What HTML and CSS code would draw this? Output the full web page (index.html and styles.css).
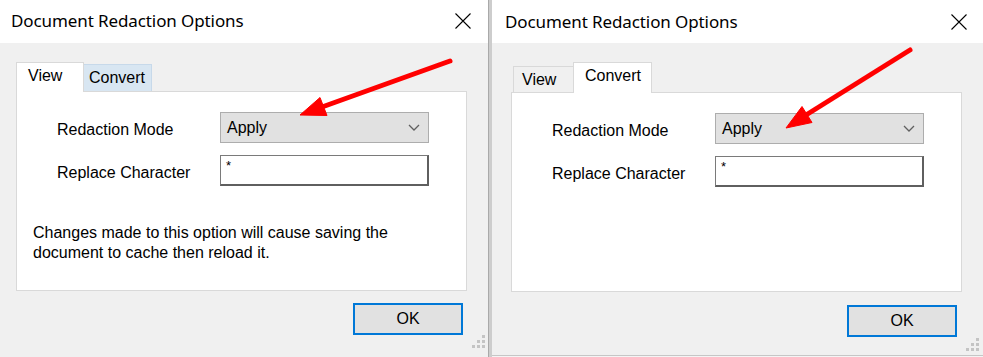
FILE: index.html
```html
<!DOCTYPE html>
<html>
<head>
<meta charset="utf-8">
<link rel="stylesheet" href="styles.css">
</head>
<body>
<div class="screen">
  <div class="dialog dialog-left">
    <div class="titlebar">
      <span class="title">Document Redaction Options</span>
      <svg class="close" width="16" height="16" viewBox="0 0 16 16"><path d="M0.5 0.5L15.5 15.5M15.5 0.5L0.5 15.5" stroke="#000" stroke-width="1.1" fill="none"/></svg>
    </div>
    <div class="body">
      <div class="tabs">
        <div class="tab tab-active tab-view-l">View</div>
        <div class="tab tab-hover tab-convert-l">Convert</div>
      </div>
      <div class="panel">
        <div class="row row-first">
          <span class="label">Redaction Mode</span>
          <div class="combo"><span>Apply</span>
            <svg class="chev" width="12" height="7" viewBox="0 0 12 7"><path d="M1 1L6 6L11 1" stroke="#606060" stroke-width="1.3" fill="none"/></svg>
          </div>
        </div>
        <div class="row row-second">
          <span class="label">Replace Character</span>
          <div class="textbox">*</div>
        </div>
        <p class="note">Changes made to this option will cause saving the<br>document to cache then reload it.</p>
      </div>
      <div class="footer"><div class="ok">OK</div></div>
    </div>
    <svg class="grip" width="14" height="14" viewBox="0 0 14 14"><g fill="#c4c4c4"><rect x="10" y="0" width="3" height="3"/><rect x="5" y="5" width="3" height="3"/><rect x="10" y="5" width="3" height="3"/><rect x="0" y="10" width="3" height="3"/><rect x="5" y="10" width="3" height="3"/><rect x="10" y="10" width="3" height="3"/></g></svg>
  </div>
  <div class="sep"></div>
  <div class="dialog dialog-right">
    <div class="titlebar">
      <span class="title">Document Redaction Options</span>
      <svg class="close" width="16" height="16" viewBox="0 0 16 16"><path d="M0.5 0.5L15.5 15.5M15.5 0.5L0.5 15.5" stroke="#000" stroke-width="1.1" fill="none"/></svg>
    </div>
    <div class="body">
      <div class="tabs">
        <div class="tab tab-idle tab-view-r">View</div>
        <div class="tab tab-active tab-convert-r">Convert</div>
      </div>
      <div class="panel">
        <div class="row row-first">
          <span class="label">Redaction Mode</span>
          <div class="combo"><span>Apply</span>
            <svg class="chev" width="12" height="7" viewBox="0 0 12 7"><path d="M1 1L6 6L11 1" stroke="#606060" stroke-width="1.3" fill="none"/></svg>
          </div>
        </div>
        <div class="row row-second">
          <span class="label">Replace Character</span>
          <div class="textbox">*</div>
        </div>
      </div>
      <div class="footer"><div class="ok">OK</div></div>
    </div>
    <svg class="grip" width="14" height="14" viewBox="0 0 14 14"><g fill="#c4c4c4"><rect x="10" y="0" width="3" height="3"/><rect x="5" y="5" width="3" height="3"/><rect x="10" y="5" width="3" height="3"/><rect x="0" y="10" width="3" height="3"/><rect x="5" y="10" width="3" height="3"/><rect x="10" y="10" width="3" height="3"/></g></svg>
  </div>
  <svg class="arrows" width="983" height="357" viewBox="0 0 983 357">
    <g fill="#f00" stroke="#f00">
      <line x1="450" y1="61" x2="322" y2="107" stroke-width="5" stroke-linecap="round"/>
      <polygon points="300,115 327,115.5 320,97.5" stroke-width="1" stroke-linejoin="round"/>
      <line x1="910" y1="50" x2="806" y2="115" stroke-width="5" stroke-linecap="round"/>
      <polygon points="786,128 812,122.5 802,106.5" stroke-width="1" stroke-linejoin="round"/>
    </g>
  </svg>
</div>
</body>
</html>
```
FILE: styles.css
```css
html, body {
  margin: 0;
  padding: 0;
}
body {
  width: 983px;
  height: 357px;
  overflow: hidden;
  background: #f4f4f4;
  font-family: "Liberation Sans", Arial, sans-serif;
  color: #000;
}
.screen {
  position: relative;
  display: flex;
  width: 983px;
  height: 357px;
}
.dialog {
  position: relative;
  display: flex;
  flex-direction: column;
  background: #f0f0f0;
}
.dialog-left {
  width: 488px;
  height: 357px;
}
.dialog-right {
  width: 491px;
  height: 355px;
  border-bottom: 1px solid #c6c6c6;
}
.sep {
  width: 3px;
  height: 357px;
  border-left: 1px solid #a9a9a9;
  background: #cdcdcd;
}
.titlebar {
  background: #fff;
  display: flex;
  align-items: center;
  justify-content: space-between;
  font-family: "Noto Sans", "Open Sans", sans-serif;
}
.dialog-left .titlebar {
  height: 41px;
  padding: 0 17px 2px 11px;
}
.dialog-right .titlebar {
  height: 43px;
  padding: 0 16px 0 13px;
}
.title {
  font-size: 17px;
  letter-spacing: -0.1px;
}
.body {
  display: flex;
  flex-direction: column;
}
.dialog-left .body {
  padding: 19px 21px 0 16px;
}
.dialog-right .body {
  padding: 19px 21px 0 19px;
}
.tabs {
  display: flex;
  align-items: flex-end;
  height: 30px;
  font-size: 16px;
  position: relative;
  z-index: 1;
  margin-bottom: -1px;
}
.dialog-right .tabs {
  height: 31px;
  margin-left: 2px;
}
.tab {
  box-sizing: border-box;
  border: 1px solid #d9d9d9;
  border-bottom: none;
  height: 27px;
  padding-top: 4px;
}
.tab-active {
  background: #fff;
  height: 100%;
  padding-top: 4px;
}
.tab-hover {
  background: #d8e6f2;
  border-color: #c7d9ea;
  margin-bottom: 1px;
}
.tab-idle {
  background: #f0f0f0;
  margin-bottom: 1px;
  height: 26px;
}
.tab-view-l { width: 68px; padding-left: 11px; }
.tab-convert-l { width: 68px; padding-left: 5px; border-left: none; }
.tab-view-r { width: 60px; padding-left: 8px; border-right: none; }
.tab-convert-r { width: 79px; padding-left: 11px; }
.panel {
  box-sizing: border-box;
  width: 451px;
  height: 200px;
  background: #fff;
  border: 1px solid #d9d9d9;
  padding: 20px 0 0 40px;
  font-size: 16px;
}
.row {
  display: flex;
  align-items: center;
}
.label {
  width: 163px;
  padding-top: 5px;
}
.combo {
  box-sizing: border-box;
  width: 209px;
  height: 31px;
  background: #e1e1e1;
  border: 1px solid #adadad;
  display: flex;
  align-items: center;
  justify-content: space-between;
  padding: 0 8px 0 6px;
}
.row-second {
  margin-top: 12px;
}
.textbox {
  box-sizing: border-box;
  width: 209px;
  height: 31px;
  border-style: solid;
  border-width: 1px 2px 2px 1px;
  border-color: #7a7a7a #5f5f5f #5f5f5f #7a7a7a;
  padding: 3px 0 0 5px;
  font-size: 13px;
  line-height: 1;
}
.note {
  margin: 37px 0 0 -24px;
  line-height: 20px;
}
.footer {
  display: flex;
  justify-content: flex-end;
  padding: 12px 4px 0 0;
}
.dialog-right .footer {
  padding-top: 13px;
  padding-right: 5px;
}
.ok {
  box-sizing: border-box;
  width: 110px;
  height: 32px;
  background: #e1e1e1;
  border: 2px solid #0078d7;
  display: flex;
  align-items: center;
  justify-content: center;
  font-size: 16px;
}
.grip {
  position: absolute;
  right: 2px;
  bottom: 8px;
}
.dialog-right .grip {
  right: 3px;
  bottom: 3px;
}
.arrows {
  position: absolute;
  left: 0;
  top: 0;
  pointer-events: none;
}
```
